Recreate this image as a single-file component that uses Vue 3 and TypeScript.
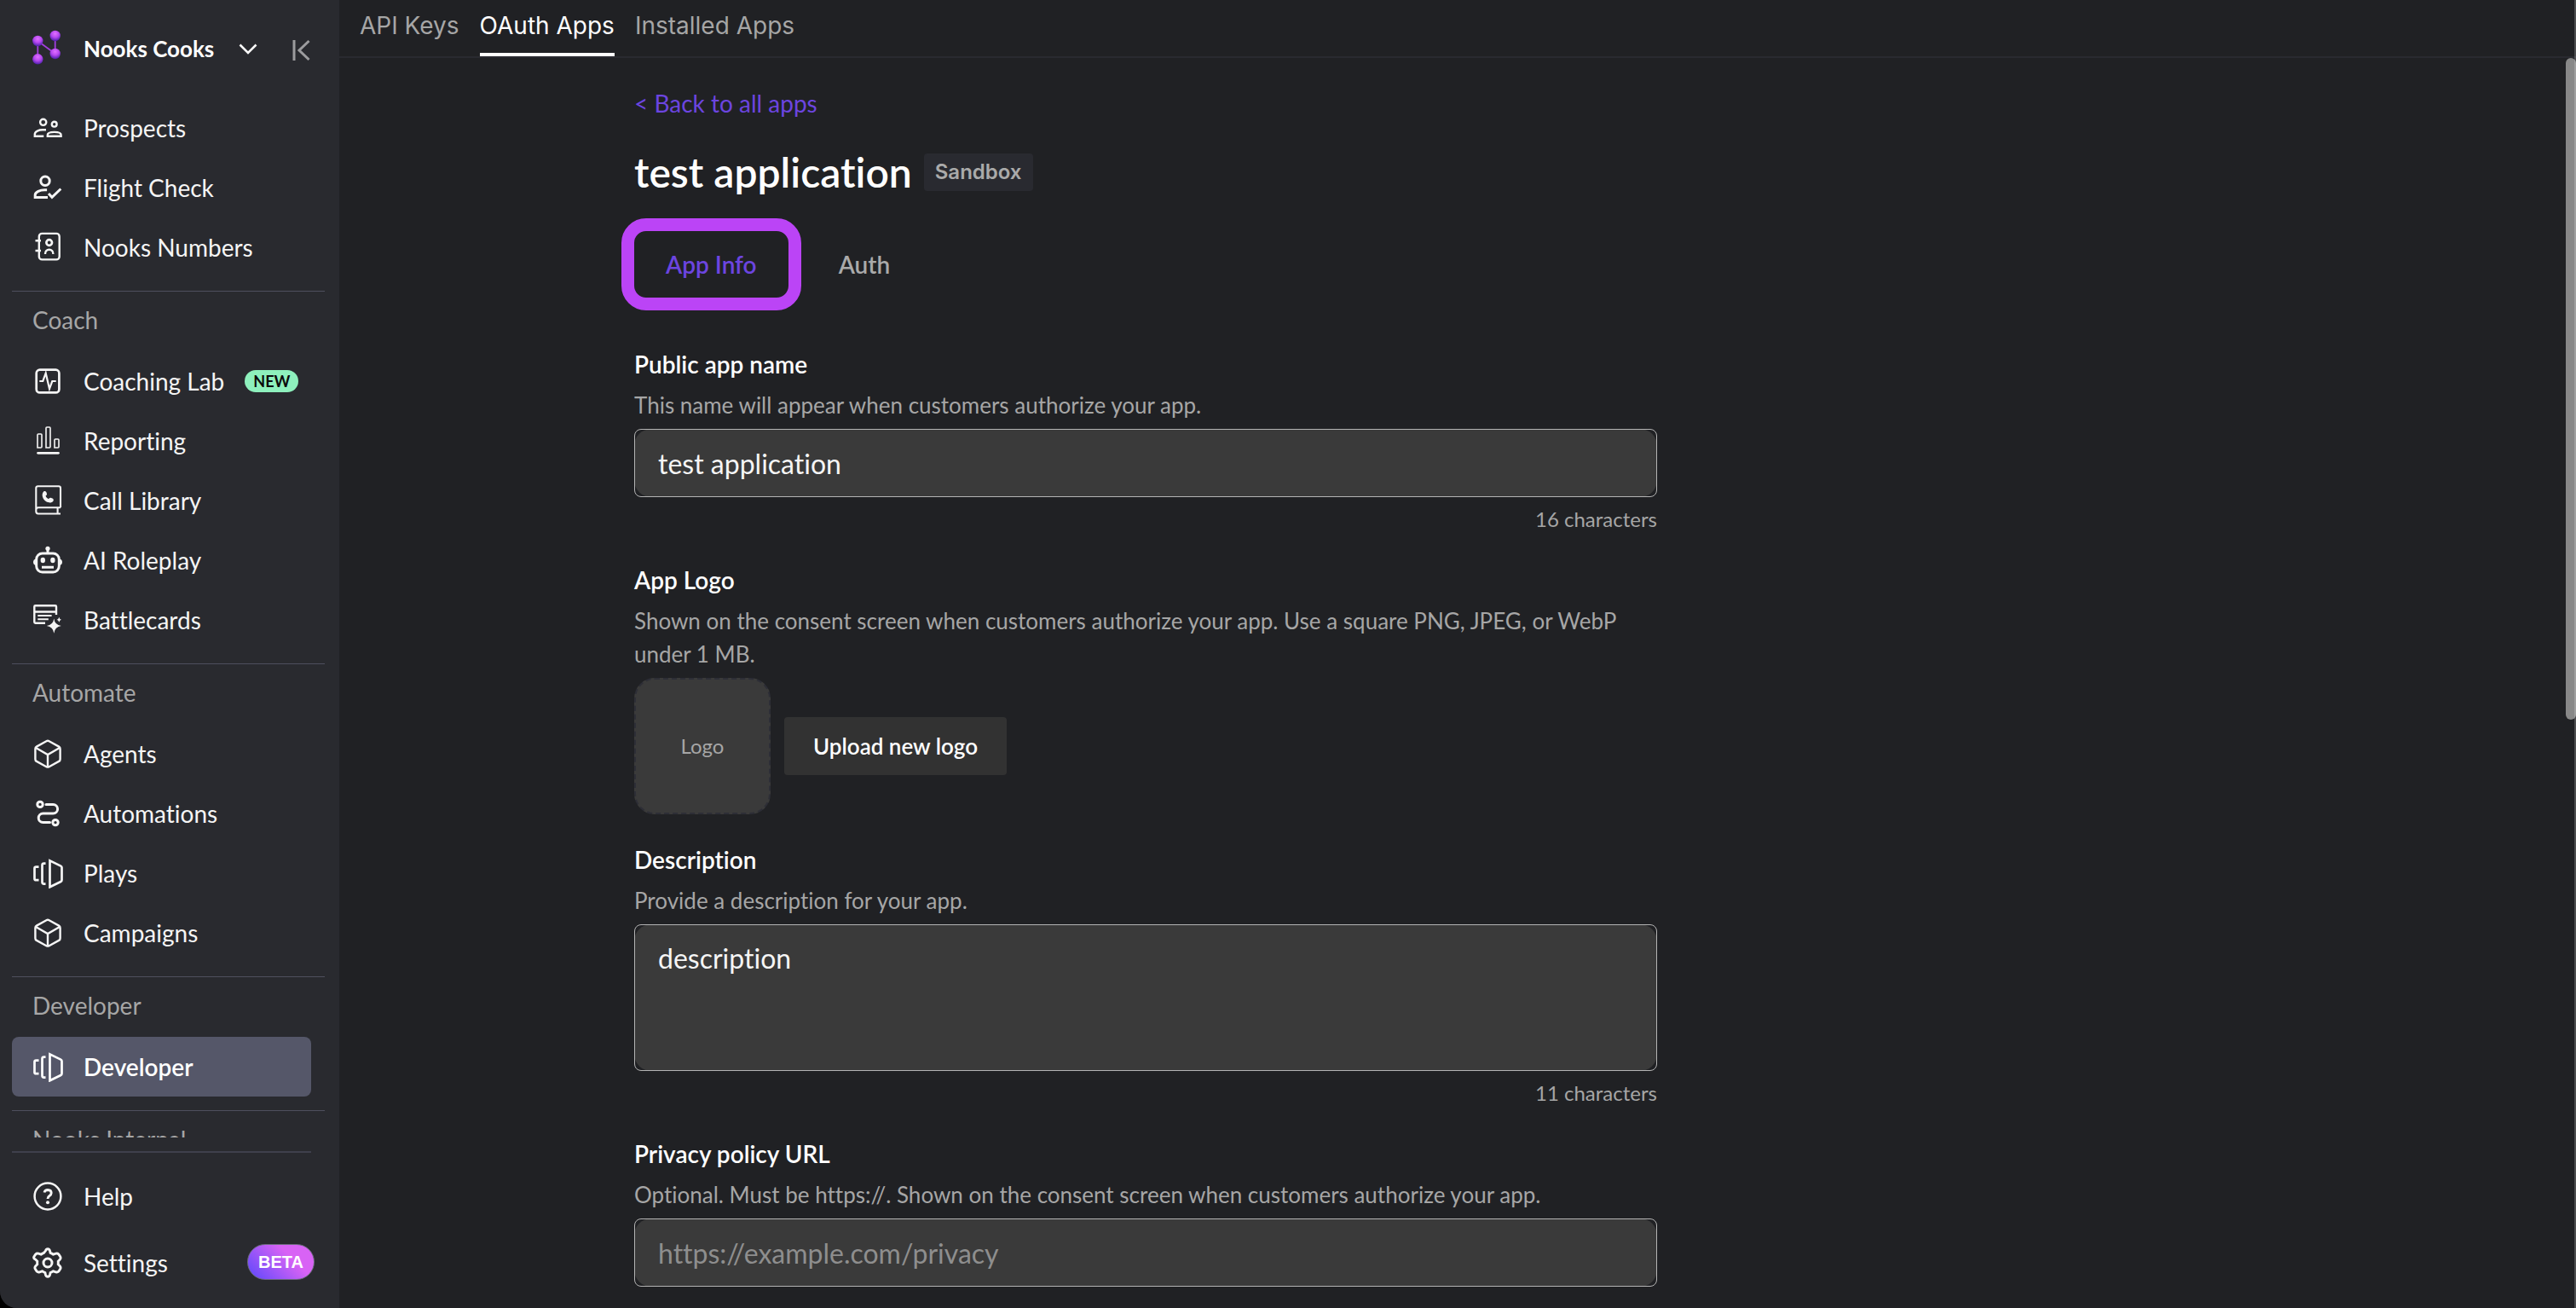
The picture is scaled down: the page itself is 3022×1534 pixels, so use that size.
<script setup lang="ts">
import { ref, computed } from 'vue'

interface NavItem {
  label: string
  icon: string
  badge?: string
  active?: boolean
}

interface NavSection {
  title?: string
  items: NavItem[]
}

const cube =
  '<path d="M16.4 3.2 4.9 9.6Q3.4 10.5 3.4 12.2v12.2q0 1.7 1.5 2.5l11.5 6.3q1.6.9 3.2 0l11.5-6.3q1.5-.8 1.5-2.5V12.2q0-1.7-1.5-2.6L19.6 3.2q-1.6-.9-3.2 0ZM4 11l14 8 14-8M18 19v14.5" stroke-width="2.4"/>'
const panels =
  '<path d="M20.5 3.3v31L33.3 28q1.2-.6 1.2-2V11.500q0-1.300-1.200-1.900ZM15.500 6.600h-2q-2 0-2 2v20q0 2 2 2h2M7.500 10.600H4.300q-1.800 0-1.800 1.800v12q0 1.800 1.800 1.800h3.200" stroke-width="2.700"/>'

const sections: NavSection[] = [
  {
    items: [
      {
        label: 'Prospects',
        icon: '<circle cx="12.7" cy="11.300" r="3.600"/><circle cx="25.700" cy="13.700" r="2.900"/><path d="M13.300 27.700H2.800v-2.200c0-3.500 5-5.200 9.200-5.200h4M17.800 27.700v-1.400c0-2.500 4-3.400 8-3.400s7.800.9 7.800 3.400v1.400z"/>'
      },
      {
        label: 'Flight Check',
        icon: '<g stroke-width="3"><circle cx="15" cy="10.300" r="5.200"/><path d="M18 29.500H3.200v-2.700c0-3.800 5.800-6.100 11.300-6.100h2.600M19 25l4 4.300 10.300-9.800"/></g>'
      },
      {
        label: 'Nooks Numbers',
        icon: '<rect x="7.800" y="1.900" width="23.900" height="30.500" rx="3.500"/><path d="M3.500 10.300H10M3.500 22H10M15 26c0-3.300 2-5.300 4.700-5.300s4.700 2 4.700 5.300"/><circle cx="19.700" cy="12.500" r="3.300" stroke-width="2.700"/>'
      }
    ]
  },
  {
    title: 'Coach',
    items: [
      {
        label: 'Coaching Lab',
        badge: 'NEW',
        icon: '<rect x="4.700" y="4.700" width="26.700" height="26.700" rx="4" stroke-width="2.700"/><path d="M8.300 18h4L15.700 8.700 20 27l3.300-9h4.400" stroke-width="2.200"/>'
      },
      {
        label: 'Reporting',
        icon: '<path d="M6 26V11q0-1 1-1h3q1 0 1 1v14q0 1-1 1zM16 26V3q0-1 1-1h3q1 0 1 1v22q0 1-1 1zM26 26V17q0-1 1-1h3q1 0 1 1v8q0 1-1 1z" stroke-width="1.600"/><path d="M6.500 32.300h24" stroke-width="2.700" stroke-linecap="round"/>'
      },
      {
        label: 'Call Library',
        icon: '<path d="M33 26.300V3.500q0-2.200-2.200-2.200H6.500q-2.200 0-2.200 2.200v27q0 3 2.600 3H33M33 26.300H7q-2.700 0-2.700 2.700M29.600 26.500v7" stroke-width="2.100"/><path d="M13.200 7.500c1-1 2.800-.3 3.300 1l.5 1.700c.2 1-.9 1.900-1.500 2.400.6 1.600 1.900 2.900 3.500 3.600.6-.7 1.500-1.700 2.500-1.400l2 .7c1.300.6 1.700 2.200.9 3.200-1.300 1.800-3.900 2.100-6 1.400-3.500-1.100-6.200-4.200-6.700-7.700-.2-1.800.3-3.700 1.500-4.900z" fill="currentColor" stroke="none"/>'
      },
      {
        label: 'AI Roleplay',
        icon: '<rect x="4.700" y="10" width="26.600" height="22" rx="7" stroke-width="3"/><path d="M18 5v5M11 26.300h14" stroke-width="3"/><g fill="currentColor" stroke="none"><circle cx="18" cy="4.300" r="2.600"/><ellipse cx="12.300" cy="18" rx="2.700" ry="3.300"/><ellipse cx="23.900" cy="18" rx="2.700" ry="3.300"/><path d="M4 16.500q-3 .8-3 3.800t3 3.800zM32 16.500q3 .8 3 3.800t-3 3.800z"/></g>'
      },
      {
        label: 'Battlecards',
        icon: '<path d="M15 21.800H3.500q-1.200 0-1.200-1.200V2.400q0-1.200 1.200-1.200h23.300q1.200 0 1.200 1.200V12M2.500 8.500H28" stroke-width="2.400"/><path d="M6.300 13h16.300M6.300 17.200h12.500" stroke-width="2"/><g fill="currentColor" stroke="none"><path d="M25.300 16.500q1 7.500 8.500 8.500-7.500 1-8.500 8.700-1-7.700-8.500-8.700 7.500-1 8.500-8.500zM31.300 14.700q.6 2.500 2.700 3-2.100.5-2.700 3-.6-2.500-2.700-3 2.100-.5 2.700-3z"/></g>'
      }
    ]
  },
  {
    title: 'Automate',
    items: [
      { label: 'Agents', icon: cube },
      {
        label: 'Automations',
        icon: '<g stroke-width="3"><circle cx="9" cy="7.400" r="3.200"/><circle cx="27" cy="28.600" r="3.200"/><path d="M16 7.400h8.300a5.300 5.300 0 0 1 0 10.600H12.500a5.300 5.300 0 0 0 0 10.600h8" stroke-linecap="round"/></g>'
      },
      { label: 'Plays', icon: panels },
      { label: 'Campaigns', icon: cube }
    ]
  },
  {
    title: 'Developer',
    items: [{ label: 'Developer', icon: panels, active: true }]
  },
  { title: 'Nooks Internal', items: [] }
]

const helpIcon =
  '<circle cx="18" cy="18" r="15.400" stroke-width="2.500"/><path d="M14 13.500q.8-3 4-3 4.200.2 4.200 3.500 0 2-2.200 3.500-2 1.300-2 3.500" stroke-width="2.900"/><circle cx="18" cy="25.300" r="2" fill="currentColor" stroke="none"/>'
const gearIcon =
  '<path d="M15.500 3.800q.7-2 2.500-2t2.500 2l.6 2.600q1.800.7 3.400 1.800l3-1q2-.6 3.300 0.800l2 3q.8 1.800-.6 3.200l-2 2q.2 1.800 0 3.600l2 2q1.400 1.400.6 3.200l-2 3q-1.300 1.400-3.300.8l-3-1q-1.600 1.100-3.400 1.800l-.6 2.600q-.7 2-2.500 2t-2.500-2l-.6-2.600q-1.800-.7-3.400-1.800l-3 1q-2 .6-3.300-.8l-2-3q-.8-1.800.6-3.200l2-2q-.2-1.800 0-3.600l-2-2Q1 12.800 1.800 11l2-3q1.300-1.400 3.300-.8l3 1q1.600-1.100 3.400-1.800z" stroke-width="2.900"/><circle cx="18" cy="18" r="5" stroke-width="3"/>'

const topTabs = ['API Keys', 'OAuth Apps', 'Installed Apps']
const appTabs = ['App Info', 'Auth']
const topTab = ref('OAuth Apps')
const appTab = ref('App Info')

const appName = ref('test application')
const description = ref('description')
const privacyUrl = ref('')
const nameCount = computed(() => `${appName.value.length} characters`)
const descriptionCount = computed(() => `${description.value.length} characters`)

const nodes = [
  { x: 6.3, y: 13 },
  { x: 26.7, y: 7 },
  { x: 26.7, y: 28 },
  { x: 6.3, y: 34.3 }
]
</script>

<template>
  <div class="shell">
    <aside class="sidebar">
      <header class="workspace">
        <svg class="logo" viewBox="0 0 36 44" aria-hidden="true">
          <defs>
            <radialGradient id="ball" cx="0.5" cy="0.3" r="0.7">
              <stop offset="0" stop-color="#e070ff" />
              <stop offset="0.5" stop-color="#b648f0" />
              <stop offset="1" stop-color="#4a1fa8" />
            </radialGradient>
          </defs>
          <path d="M6.3 34V13L26.700 28V7" fill="none" stroke="#a33fe0" stroke-width="1.800" />
          <circle v-for="n in nodes" :key="n.x + '-' + n.y" :cx="n.x" :cy="n.y" r="6.200" fill="url(#ball)" />
        </svg>
        <button class="workspace-name" type="button">
          <span>Nooks Cooks</span>
          <svg class="chevron" viewBox="0 0 24 24" aria-hidden="true">
            <path d="M2.500 7.500 12 17l9.500-9.500" fill="none" stroke="currentColor" stroke-width="2.500" />
          </svg>
        </button>
        <button class="collapse" type="button" aria-label="Collapse sidebar">
          <svg viewBox="0 0 24 28" aria-hidden="true">
            <path d="M4 2v24M21.500 3 10 14l11.500 11" fill="none" stroke="currentColor" stroke-width="3" />
          </svg>
        </button>
      </header>

      <nav class="nav">
        <section v-for="(section, i) in sections" :key="i" class="nav-section">
          <h2 v-if="section.title" class="nav-title">{{ section.title }}</h2>
          <a
            v-for="item in section.items"
            :key="item.label"
            href="#"
            class="nav-item"
            :class="{ active: item.active }"
          >
            <svg class="icon" viewBox="0 0 36 36" aria-hidden="true" v-html="item.icon"></svg>
            <span>{{ item.label }}</span>
            <span v-if="item.badge" class="badge-new">{{ item.badge }}</span>
          </a>
        </section>
      </nav>

      <footer class="side-footer">
        <a href="#" class="nav-item">
          <svg class="icon" viewBox="0 0 36 36" aria-hidden="true" v-html="helpIcon"></svg>
          <span>Help</span>
        </a>
        <a href="#" class="nav-item">
          <svg class="icon" viewBox="0 0 36 36" aria-hidden="true" v-html="gearIcon"></svg>
          <span>Settings</span>
          <span class="badge-beta">BETA</span>
        </a>
      </footer>
    </aside>

    <main class="main">
      <div class="top-tabs" role="tablist">
        <button
          v-for="tab in topTabs"
          :key="tab"
          type="button"
          role="tab"
          class="top-tab"
          :class="{ selected: tab === topTab }"
          :aria-selected="tab === topTab"
          @click="topTab = tab"
        >
          {{ tab }}
        </button>
      </div>

      <div class="scroll-area">
        <div class="content">
          <a href="#" class="back">&lt; Back to all apps</a>
          <div class="heading">
            <h1>test application</h1>
            <span class="env">Sandbox</span>
          </div>

          <div class="app-tabs" role="tablist">
            <button
              v-for="tab in appTabs"
              :key="tab"
              type="button"
              role="tab"
              class="app-tab"
              :class="{ selected: tab === appTab }"
              :aria-selected="tab === appTab"
              @click="appTab = tab"
            >
              {{ tab }}
            </button>
          </div>

          <form class="form" @submit.prevent>
            <div class="field">
              <label for="app-name">Public app name</label>
              <p class="hint">This name will appear when customers authorize your app.</p>
              <div class="control"><input id="app-name" v-model="appName" type="text" /></div>
              <p class="count">{{ nameCount }}</p>
            </div>

            <div class="field">
              <label for="upload-logo">App Logo</label>
              <p class="hint">
                Shown on the consent screen when customers authorize your app. Use a square PNG, JPEG, or WebP under 1
                MB.
              </p>
              <div class="logo-row">
                <div class="logo-box">Logo</div>
                <button id="upload-logo" class="upload" type="button">Upload new logo</button>
              </div>
            </div>

            <div class="field">
              <label for="description">Description</label>
              <p class="hint">Provide a description for your app.</p>
              <div class="control"><textarea id="description" v-model="description"></textarea></div>
              <p class="count">{{ descriptionCount }}</p>
            </div>

            <div class="field">
              <label for="privacy">Privacy policy URL</label>
              <p class="hint">
                Optional. Must be https://. Shown on the consent screen when customers authorize your app.
              </p>
              <div class="control">
                <input id="privacy" v-model="privacyUrl" type="url" placeholder="https://example.com/privacy" />
              </div>
            </div>
          </form>
        </div>
        <div class="thumb" aria-hidden="true"></div>
      </div>
    </main>
  </div>
</template>

<style>
body {
  margin: 0;
  background: #000;
}
</style>

<style scoped>
* {
  box-sizing: border-box;
}

.shell {
  position: relative;
  display: flex;
  height: 100vh;
  overflow: hidden;
  border-bottom-left-radius: 20px;
  background: #202124;
  color: #f5f5f5;
  font: 400 28px/42px Lato, sans-serif;
  font-variant-ligatures: none;
}

/* Window edge, drawn over the scrollbar */
.shell::after {
  position: absolute;
  inset: 0 0 0 auto;
  width: 2px;
  background: rgb(255 255 255 / 20%);
  content: '';
}

button {
  margin: 0;
  padding: 0;
  border: 0;
  background: none;
  color: inherit;
  font: inherit;
  cursor: pointer;
}

a {
  color: inherit;
  text-decoration: none;
}

h1,
h2,
p {
  margin: 0;
  font-weight: 400;
}

.sidebar {
  display: flex;
  flex: none;
  flex-direction: column;
  width: 398px;
  padding: 0 17px 0 14px;
  background: #292a2f;
}

.workspace {
  display: flex;
  flex: none;
  align-items: center;
  height: 115px;
  padding: 0 0 2px 24px;
}

.logo {
  width: 36px;
  height: 44px;
  margin-right: 24px;
}

.workspace-name {
  display: flex;
  align-items: center;
  gap: 28px;
  color: #fff;
  font-size: 26px;
  font-weight: 700;
}

.chevron {
  width: 24px;
  height: 24px;
}

.collapse {
  display: flex;
  margin: 4px 16px 0 auto;
  color: #9c9c9e;
}

.collapse svg {
  width: 24px;
  height: 28px;
}

.nav {
  flex: 1;
  min-height: 0;
  overflow: hidden;
}

.nav-section + .nav-section {
  margin-top: 16px;
  border-top: 1px solid #4e4f5e;
}

.nav-title {
  padding: 12px 24px 16px;
  color: #a6a6a6;
  font-size: 28px;
  line-height: 42px;
}

.nav-item {
  display: flex;
  align-items: center;
  height: 70px;
  margin-right: 16px;
  padding-left: 24px;
  border-radius: 8px;
  gap: 24px;
}

.nav-item.active {
  background: #555769;
  color: #fff;
  font-weight: 600;
}

.icon {
  flex: none;
  width: 36px;
  height: 36px;
  fill: none;
  stroke: currentColor;
  stroke-width: 2.4;
}

.badge-new {
  padding: 0 10px;
  border-radius: 13px;
  background: #8ef0bd;
  color: #0b0b0b;
  font-size: 18px;
  font-weight: 700;
  line-height: 26px;
}

.side-footer {
  flex: none;
  height: 200px;
  padding-top: 16px;
}

.side-footer::before {
  display: block;
  height: 2px;
  margin: 0 16px 16px 0;
  background: #3f404c;
  content: '';
}

.side-footer .nav-item + .nav-item {
  margin: 8px 12px 0 0;
}

.badge-beta {
  margin: 0 0 2px auto;
  padding: 0 12px;
  border: 1px solid #6d6a80;
  border-radius: 21px;
  background: linear-gradient(45deg, #5b47fb, #d863f5 65%);
  color: #fff;
  font: 700 20px/40px 'Liberation Sans', sans-serif;
}

.main {
  display: flex;
  flex: 1;
  flex-direction: column;
  min-width: 0;
}

.top-tabs {
  display: flex;
  flex: none;
  gap: 24px;
  padding-left: 24px;
  border-bottom: 2px solid #292a30;
}

.top-tab {
  height: 66px;
  padding-bottom: 2px;
  border-bottom: 4px solid transparent;
  color: #a6a6a6;
  font: 400 28px/42px Inter, sans-serif;
}

.top-tab.selected {
  border-color: #fff;
  color: #fff;
}

.scroll-area {
  position: relative;
  flex: 1;
  min-height: 0;
  overflow: hidden;
}

.content {
  max-width: 1932px;
  margin: 0 auto;
  padding-top: 32px;
}

.back {
  display: block;
  width: fit-content;
  color: #6c45e0;
}

.heading {
  display: flex;
  align-items: center;
  gap: 14px;
  margin-top: 30px;
}

h1 {
  color: #fff;
  font-size: 48px;
  font-weight: 600;
  line-height: 60px;
}

.env {
  padding: 0 13px;
  border-radius: 4px;
  background: #292a30;
  color: #aaa;
  font: 600 24px/44px Inter, sans-serif;
}

.app-tabs {
  display: flex;
  gap: 22px;
  margin: 39px 0 57px;
}

.app-tab {
  height: 78px;
  padding: 0 37px;
  color: #aaa;
  font-weight: 600;
}

.app-tab.selected {
  border-radius: 14px;
  outline: 15px solid #bb44f6;
  color: #6c45e0;
}

.form {
  display: flex;
  flex-direction: column;
  gap: 32px;
  max-width: 1200px;
}

.field {
  display: flex;
  flex-direction: column;
  gap: 8px;
}

label {
  color: #fff;
  font-weight: 600;
}

.hint {
  color: #a6a6a6;
  font-size: 26px;
  line-height: 39px;
}

.control {
  display: flex;
  border-radius: 20px;
  background: #3a3a3a;
}

input,
textarea {
  width: 100%;
  height: 80px;
  margin: 0;
  padding: 0 27px;
  border: 1px solid #b4b4b4;
  border-radius: 8px;
  outline: 0;
  background: transparent;
  color: #f5f5f5;
  font: 400 32px/46px Lato, sans-serif;
  font-variant-ligatures: none;
  resize: none;
}

textarea {
  height: 172px;
  padding: 16px 27px;
}

input::placeholder {
  color: #8e8e8e;
}

.count {
  color: #a6a6a6;
  font-size: 24px;
  line-height: 36px;
  text-align: right;
}

.logo-row {
  display: flex;
  align-items: center;
  gap: 16px;
}

.logo-box {
  display: flex;
  align-items: center;
  justify-content: center;
  width: 160px;
  height: 160px;
  border: 2px dashed #2d2e36;
  border-radius: 24px;
  background: #3a3a3a;
  color: #a6a6a6;
  font-size: 24px;
}

.upload {
  height: 68px;
  padding: 0 34px;
  border-radius: 4px;
  background: #323232;
  color: #fff;
  font-size: 26px;
  font-weight: 600;
}

.thumb {
  position: absolute;
  top: 0;
  right: 0;
  width: 12px;
  height: 776px;
  border-radius: 6px;
  background: #888;
}
</style>
